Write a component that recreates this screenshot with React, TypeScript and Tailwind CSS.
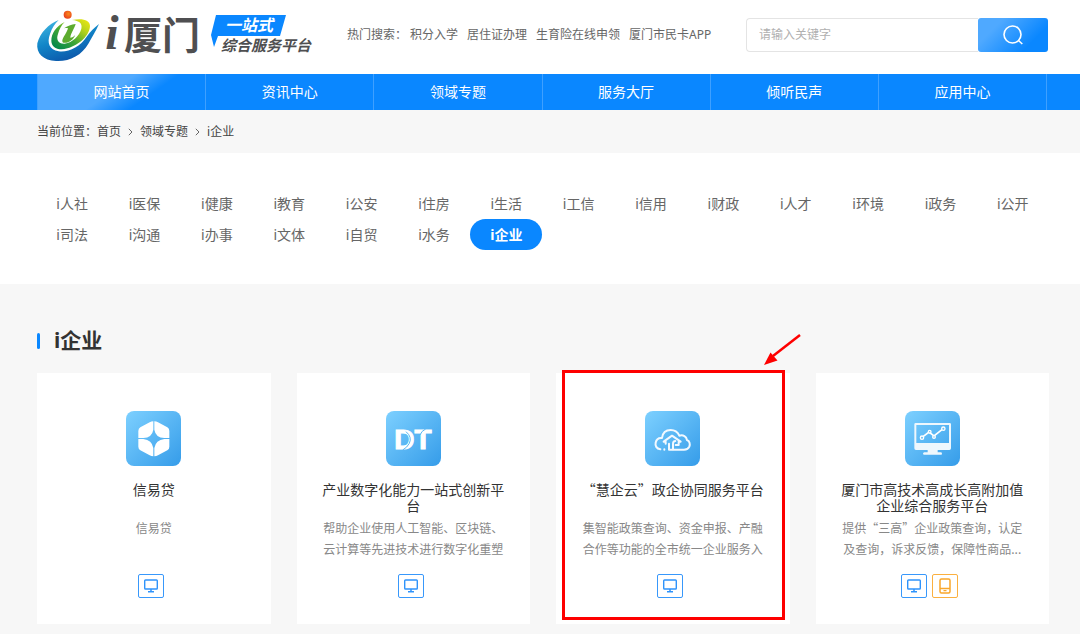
import React from "react";

const hotSearches = ["积分入学", "居住证办理", "生育险在线申领", "厦门市民卡APP"];
const navItems = ["网站首页", "资讯中心", "领域专题", "服务大厅", "倾听民声", "应用中心"];
const topics = [
  "i人社", "i医保", "i健康", "i教育", "i公安", "i住房", "i生活", "i工信", "i信用", "i财政", "i人才",
  "i环境", "i政务", "i公开", "i司法", "i沟通", "i办事", "i文体", "i自贸", "i水务", "i企业",
];

function LogoMark() {
  return (
    <svg viewBox="6 2 192 162" className="h-[54px] w-16 shrink-0" aria-hidden="true">
      <defs>
        <linearGradient id="swoosh" x1="0.2" y1="0" x2="0.7" y2="1">
          <stop offset="0" stopColor="#3fb4e0" />
          <stop offset="0.45" stopColor="#1186c8" />
          <stop offset="1" stopColor="#0b4fa5" />
        </linearGradient>
        <linearGradient id="leaf" x1="1" y1="0" x2="0.1" y2="0.9">
          <stop offset="0" stopColor="#f3ea12" />
          <stop offset="0.3" stopColor="#b5d21c" />
          <stop offset="0.65" stopColor="#3fa535" />
          <stop offset="1" stopColor="#078a4b" />
        </linearGradient>
        <radialGradient id="sun" cx="0.6" cy="0.4" r="0.6">
          <stop offset="0" stopColor="#f98a1c" />
          <stop offset="1" stopColor="#e8411c" />
        </radialGradient>
      </defs>
      <path
        d="M74 38C44 50 18 76 10 108C6 138 28 160 66 161C106 163 142 146 164 108C172 92 184 74 195 50C180 62 168 74 158 88C138 118 104 136 74 132C46 128 38 106 48 80C54 62 62 50 74 38Z"
        fill="url(#swoosh)"
      />
      <path
        d="M92 44C66 58 52 78 52 100C52 120 72 131 100 123C136 113 167 84 168 56C168 38 146 32 114 38C136 40 146 48 142 64C136 86 116 105 92 109C72 110 66 96 72 80C76 66 82 54 92 44Z"
        fill="url(#leaf)"
      />
      <path
        d="M90 63C100 56 112 51 125 50C121 64 110 78 109 91C114 91 120 88 124 82C118 98 102 109 88 106C82 102 86 92 93 82C98 74 101 68 102 63C98 62 95 62 90 63Z"
        fill="#5cab2e"
      />
      <circle cx="101" cy="22" r="12" fill="url(#sun)" />
    </svg>
  );
}

function TileFrame({ id, children }: { id: string; children: React.ReactNode }) {
  return (
    <svg viewBox="0 0 165 165" className="size-[55px]" aria-hidden="true">
      <defs>
        <linearGradient id={id} x1="0" y1="0" x2="1" y2="1">
          <stop offset="0" stopColor="#7dd0ff" />
          <stop offset="1" stopColor="#359ce9" />
        </linearGradient>
      </defs>
      <rect width="165" height="165" rx="24" fill={`url(#${id})`} />
      {children}
    </svg>
  );
}

function CreditIcon() {
  return (
    <TileFrame id="tile-credit">
      <g fill="#fff">
        <path d="M82 31V56Q78 80 52 81H37V60Q37 53 43 49L71 34Q76 31 82 31Z" />
        <path d="M85 31V56Q89 80 115 81H130V60Q130 53 124 49L96 34Q91 31 85 31Z" />
        <path d="M82 136V111Q78 87 52 84H37V107Q37 114 43 118L71 133Q76 136 82 136Z" />
        <path d="M85 136V111Q89 87 115 84H130V107Q130 114 124 118L96 133Q91 136 85 136Z" />
      </g>
    </TileFrame>
  );
}

function DigitalIcon() {
  return (
    <TileFrame id="tile-digital">
      <text
        x="25"
        y="114"
        fill="#fff"
        stroke="#fff"
        strokeWidth="3"
        fontFamily="'Liberation Sans', sans-serif"
        fontWeight="700"
        fontSize="84"
      >
        DT
      </text>
      <path d="M60 62Q79 78 70 97Q64 109 50 117" fill="none" stroke="#5bb7f3" strokeWidth="3" />
      <path d="M119 54Q106 60 102 72" fill="none" stroke="#5bb7f3" strokeWidth="3" />
    </TileFrame>
  );
}

function CloudIcon() {
  return (
    <TileFrame id="tile-cloud">
      <g fill="none" stroke="#f2f9ff" strokeWidth="6" strokeLinecap="round" strokeLinejoin="round">
        <path d="M46 115C34 113 30 104 32 95C34 85 42 80 51 81C53 65 64 57 77 57C90 57 98 63 103 74C115 71 124 76 126 87C134 90 136 99 133 107C130 114 125 116 117 116H72V98" />
        <path d="M62 98V92H56L81 74L107 92H101V102H92" />
        <path d="M84 115V99Q84 90 91 90" />
        <path d="M58 115V116" />
      </g>
    </TileFrame>
  );
}

function ChartIcon() {
  return (
    <TileFrame id="tile-chart">
      <path
        d="M32 36H134Q138 36 138 40V112Q138 117 133 117H98V124H107Q111 124 111 128T107 131H58Q54 131 54 128T58 124H68V117H33Q28 117 28 112V40Q28 36 32 36ZM34 42V96H132V42Z"
        fill="#eef7fd"
        fillRule="evenodd"
      />
      <path d="M54 77L72 63L87 75L111 56" fill="none" stroke="#fff" strokeWidth="5" />
      <g fill="#6cbcf0" stroke="#fff" strokeWidth="4">
        <circle cx="51" cy="80" r="5" />
        <circle cx="74" cy="62" r="4" />
        <circle cx="87" cy="78" r="4" />
        <circle cx="115" cy="53" r="5" />
      </g>
    </TileFrame>
  );
}

function DesktopLink() {
  return (
    <a
      href="#desktop"
      aria-label="电脑端"
      className="mr-[5px] flex h-6 w-[26px] items-center justify-center rounded-[2px] border border-[#3898fb] text-[#2e93fb]"
    >
      <svg viewBox="0 0 14 14" className="size-3.5" fill="none" stroke="currentColor" aria-hidden="true">
        <rect x="0.700" y="1" width="12.600" height="9" rx="0.800" strokeWidth="1.400" />
        <path d="M7 10V12.500M4 12.800H10" strokeWidth="1.500" />
      </svg>
    </a>
  );
}

function MobileLink() {
  return (
    <a
      href="#mobile"
      aria-label="手机端"
      className="mr-[5px] flex h-6 w-[26px] items-center justify-center rounded-[2px] border border-[#fbb03f] text-[#f9a72b]"
    >
      <svg viewBox="0 0 12 16" className="h-4 w-3" fill="none" stroke="currentColor" aria-hidden="true">
        <rect x="1" y="1" width="10" height="14" rx="1.500" strokeWidth="1.500" />
        <path d="M1 10.500H11M4.500 12.700H7.500" strokeWidth="1.300" />
      </svg>
    </a>
  );
}

function Highlight() {
  return (
    <>
      <div className="pointer-events-none absolute -top-[3px] bottom-1 left-1.5 right-[5px] border-[3px] border-[#fe0000]" />
      <svg
        viewBox="0 0 40 34"
        className="pointer-events-none absolute -right-3 -top-10 h-[34px] w-10"
        aria-hidden="true"
      >
        <path d="M38 2L11 23" stroke="#fe0000" strokeWidth="2.500" />
        <path d="M2 32L8.500 19.500L15.500 27.500Z" fill="#fe0000" />
      </svg>
    </>
  );
}

const services = [
  { title: "信易贷", text: "信易贷", icon: <CreditIcon />, mobile: false, marked: false },
  {
    title: "产业数字化能力一站式创新平台",
    text: "帮助企业使用人工智能、区块链、云计算等先进技术进行数字化重塑",
    icon: <DigitalIcon />,
    mobile: false,
    marked: false,
  },
  {
    title: "“慧企云”政企协同服务平台",
    text: "集智能政策查询、资金申报、产融合作等功能的全市统一企业服务入",
    icon: <CloudIcon />,
    mobile: false,
    marked: true,
  },
  {
    title: "厦门市高技术高成长高附加值企业综合服务平台",
    text: "提供“三高”企业政策查询，认定及查询，诉求反馈，保障性商品...",
    icon: <ChartIcon />,
    mobile: true,
    marked: false,
  },
];

export default function App() {
  return (
    <div
      lang="zh-CN"
      className="min-h-screen bg-[#f7f7f7] font-['Noto_Sans','Noto_Sans_CJK_SC',sans-serif] text-[#333]"
    >
      <header className="flex h-[74px] items-center bg-white pb-1 pl-9 pr-8">
        <a href="#home" className="flex shrink-0 items-center" aria-label="i厦门 一站式综合服务平台">
          <LogoMark />
          <span className="flex items-center pb-1 leading-none text-[#4f4f51]">
            <span className="w-6 text-center font-['Liberation_Serif',serif] text-5xl font-bold italic leading-none">i</span>
            <span className="font-['Noto_Sans_CJK_SC',sans-serif] text-[38px] font-bold leading-none">厦门</span>
          </span>
          <span className="relative ml-[11px] flex w-[100px] flex-col">
            <svg viewBox="0 0 76 32" className="absolute left-0 top-0 h-8 w-[76px]" aria-hidden="true">
              <path d="M5 0H75L69 21H7L3 32L0 20Z" fill="#0a87ff" />
            </svg>
            <span className="relative pl-3.5 font-['Liberation_Sans','Noto_Sans_CJK_SC',sans-serif] text-base font-bold italic leading-[22px] text-white">
              一站式
            </span>
            <span className="relative whitespace-nowrap pl-2.5 font-['Liberation_Sans','Noto_Sans_CJK_SC',sans-serif] text-[15px] font-bold italic leading-[18px] text-[#4f4f51]">
              综合服务平台
            </span>
          </span>
        </a>

        <div className="ml-9 flex shrink-0 items-center whitespace-nowrap text-xs text-[#666]">
          <span className="mr-[3px]">热门搜索：</span>
          <ul className="flex gap-[9px]">
            {hotSearches.map((word) => (
              <li key={word}>
                <a href="#search">{word}</a>
              </li>
            ))}
          </ul>
        </div>

        <form className="ml-auto flex h-[34px] w-[302px]" onSubmit={(e) => e.preventDefault()}>
          <input
            type="text"
            aria-label="请输入关键字"
            placeholder="请输入关键字"
            className="min-w-0 flex-1 rounded-l-[4px] border border-r-0 border-[#e4e4e4] bg-white px-3 text-xs outline-none placeholder:text-[#b0b0b0]"
          />
          <button
            type="submit"
            aria-label="搜索"
            className="flex w-[70px] items-center justify-center rounded-[3px] bg-linear-[135deg] from-[#4fa9ff] from-25% to-[#0a87ff] to-75% text-white"
          >
            <svg viewBox="0 0 20 20" className="size-5" fill="none" stroke="currentColor" strokeWidth="1.600" aria-hidden="true">
              <circle cx="9.500" cy="9.500" r="8.500" />
              <path d="M15.500 15.500L19.300 19" />
            </svg>
          </button>
        </form>
      </header>

      <nav className="bg-[#0a87ff] pl-[37px] pr-[33px]">
        <ul className="grid grid-cols-6 border-r border-[#3fa0ff]">
          {navItems.map((item, i) => (
            <li key={item} className="border-l border-[#3fa0ff]">
              <a
                href="#nav"
                className={
                  "flex h-9 items-center justify-center text-sm text-white " +
                  (i === 0 ? "bg-linear-[145deg] from-[#4fa9ff] from-45% to-[#0a87ff] to-65%" : "")
                }
              >
                {item}
              </a>
            </li>
          ))}
        </ul>
      </nav>

      <div className="flex h-[43px] items-center whitespace-nowrap px-[37px] text-xs text-[#444]">
        <span>当前位置：</span>
        <a href="#home">首页</a>
        <svg viewBox="0 0 5 8" className="mx-[7px] h-2 w-[5px]" fill="none" stroke="#666" aria-hidden="true">
          <path d="M0.800 0.800L4 4L0.800 7.200" />
        </svg>
        <a href="#topics">领域专题</a>
        <svg viewBox="0 0 5 8" className="mx-[7px] h-2 w-[5px]" fill="none" stroke="#666" aria-hidden="true">
          <path d="M0.800 0.800L4 4L0.800 7.200" />
        </svg>
        <span>i企业</span>
      </div>

      <section className="bg-white pb-[34px] pl-9 pr-[31px] pt-[35px]">
        <ul className="grid grid-cols-14">
          {topics.map((topic) => (
            <li key={topic}>
              <a
                href="#topic"
                className={
                  "flex h-[31px] items-center justify-center whitespace-nowrap rounded-full text-sm " +
                  (topic === "i企业" ? "bg-[#0a87ff] font-bold text-white" : "text-[#666]")
                }
              >
                {topic}
              </a>
            </li>
          ))}
        </ul>
      </section>

      <main className="pb-2.5 pl-[37px] pr-[31px] pt-[41px]">
        <h2 className="flex h-8 items-center text-[21px] font-bold text-[#333]">
          <span className="mr-3.5 h-4 w-[3px] rounded-sm bg-[#0a87ff]" />
          i企业
        </h2>
        <div className="mt-4 grid grid-cols-4 gap-[26px]">
          {services.map((s) => (
            <article
              key={s.title}
              className="relative flex flex-col items-center bg-white px-[25px] pb-[26px] pt-[38px] text-center font-['Noto_Sans_CJK_SC',sans-serif]"
            >
              {s.icon}
              <h3 className="mt-[15px] min-h-8 text-sm leading-4 text-[#333]">{s.title}</h3>
              <p className="mt-1 min-h-[42px] text-xs leading-[21px] text-[#888]">{s.text}</p>
              <div className="mt-[15px] flex">
                <DesktopLink />
                {s.mobile && <MobileLink />}
              </div>
              {s.marked && <Highlight />}
            </article>
          ))}
        </div>
      </main>
    </div>
  );
}
